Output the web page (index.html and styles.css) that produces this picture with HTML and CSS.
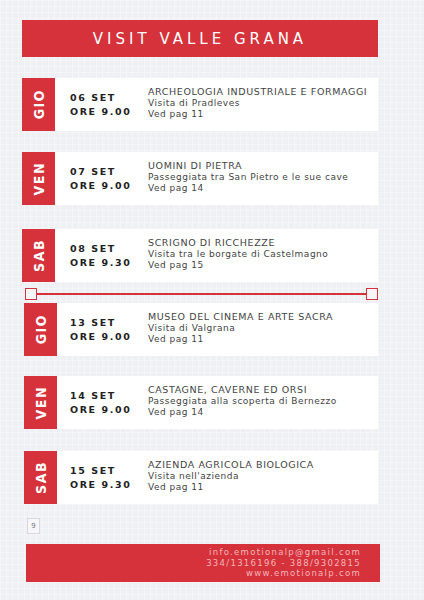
FILE: index.html
```html
<!DOCTYPE html>
<html lang="it">
<head>
<meta charset="utf-8">
<title>Visit Valle Grana</title>
<link rel="stylesheet" href="styles.css">
</head>
<body>
<div class="page">
  <header class="title">VISIT VALLE GRANA</header>

  <div class="events">
    <div class="row r1">
      <div class="day"><span>GIO</span></div>
      <div class="card">
        <div class="date">06 SET<br>ORE 9.00</div>
        <div class="desc"><div class="name">ARCHEOLOGIA INDUSTRIALE E FORMAGGI</div><div>Visita di Pradleves</div><div>Ved pag 11</div></div>
      </div>
    </div>
    <div class="row r2">
      <div class="day"><span>VEN</span></div>
      <div class="card">
        <div class="date">07 SET<br>ORE 9.00</div>
        <div class="desc"><div class="name">UOMINI DI PIETRA</div><div>Passeggiata tra San Pietro e le sue cave</div><div>Ved pag 14</div></div>
      </div>
    </div>
    <div class="row r3">
      <div class="day"><span>SAB</span></div>
      <div class="card">
        <div class="date">08 SET<br>ORE 9.30</div>
        <div class="desc"><div class="name">SCRIGNO DI RICCHEZZE</div><div>Visita tra le borgate di Castelmagno</div><div>Ved pag 15</div></div>
      </div>
    </div>

    <div class="divider"><i class="sq"></i><i class="line"></i><i class="sq"></i></div>

    <div class="row r4 shift">
      <div class="day"><span>GIO</span></div>
      <div class="card">
        <div class="date">13 SET<br>ORE 9.00</div>
        <div class="desc"><div class="name">MUSEO DEL CINEMA E ARTE SACRA</div><div>Visita di Valgrana</div><div>Ved pag 11</div></div>
      </div>
    </div>
    <div class="row r5 shift">
      <div class="day"><span>VEN</span></div>
      <div class="card">
        <div class="date">14 SET<br>ORE 9.00</div>
        <div class="desc"><div class="name">CASTAGNE, CAVERNE ED ORSI</div><div>Passeggiata alla scoperta di Bernezzo</div><div>Ved pag 14</div></div>
      </div>
    </div>
    <div class="row r6 shift">
      <div class="day"><span>SAB</span></div>
      <div class="card">
        <div class="date">15 SET<br>ORE 9.30</div>
        <div class="desc"><div class="name">AZIENDA AGRICOLA BIOLOGICA</div><div>Visita nell'azienda</div><div>Ved pag 11</div></div>
      </div>
    </div>
  </div>

  <div class="pagenum">9</div>

  <footer class="footer">
    <div>info.emotionalp@gmail.com</div>
    <div>334/1316196 - 388/9302815</div>
    <div>www.emotionalp.com</div>
  </footer>
</div>
</body>
</html>
```

FILE: styles.css
```css
html, body {
  margin: 0;
  padding: 0;
}
body {
  width: 424px;
  height: 600px;
  overflow: hidden;
  background-color: #eff0f4;
  background-image:
    linear-gradient(rgba(255,255,255,0.35) 1px, transparent 1px),
    linear-gradient(90deg, rgba(255,255,255,0.35) 1px, transparent 1px);
  background-size: 6px 6px;
  font-family: "DejaVu Sans", "Open Sans", sans-serif;
}
.page {
  padding: 20px 0 0 22px;
  width: 356px;
}
.title {
  height: 37px;
  background: #d6323b;
  color: #fff;
  font-family: "DejaVu Sans", sans-serif;
  font-size: 15px;
  letter-spacing: 4px;
  display: flex;
  align-items: center;
  justify-content: center;
  margin-bottom: 21px;
}
.events {
  display: flex;
  flex-direction: column;
}
.row {
  display: flex;
  height: 53px;
}
.r2 { margin-top: 21px; }
.r3 { margin-top: 24px; }
.r5 { margin-top: 20px; }
.r6 { margin-top: 22px; }
.shift { margin-left: 2px; }
.day {
  width: 33px;
  flex: none;
  background: #d6323b;
  color: #fff;
  display: flex;
  align-items: center;
  justify-content: center;
}
.day span {
  writing-mode: vertical-rl;
  transform: rotate(180deg);
  font-family: "DejaVu Sans Condensed", "DejaVu Sans", sans-serif;
  font-weight: bold;
  font-size: 14px;
  letter-spacing: 1.5px;
}
.card {
  flex: 1;
  background: #fff;
  display: flex;
  align-items: center;
  padding-left: 15px;
}
.shift .card {
  padding-left: 13px;
}
.date {
  width: 78px;
  flex: none;
  font-weight: bold;
  font-size: 9.5px;
  line-height: 14px;
  letter-spacing: 1.6px;
  color: #222;
}
.desc {
  font-size: 9px;
  line-height: 11.5px;
  letter-spacing: 0.5px;
  color: #444;
  white-space: nowrap;
  padding-bottom: 2px;
}
.desc .name {
  font-size: 9.5px;
  letter-spacing: 0.6px;
}
.divider {
  display: flex;
  align-items: center;
  height: 12px;
  margin: 6px 0 3px 3px;
}
.sq {
  width: 10px;
  height: 10px;
  border: 1px solid #d6323b;
  background: #f6f6f8;
  flex: none;
}
.line {
  flex: 1;
  height: 2px;
  background: #d6323b;
}
.pagenum {
  margin: 14px 0 0 5px;
  width: 11px;
  height: 14px;
  border: 1px solid #d8d8de;
  background: #f7f7fa;
  font-size: 7px;
  color: #777;
  display: flex;
  align-items: center;
  justify-content: center;
}
.footer {
  margin: 10px -2px 0 4px;
  height: 38px;
  background: #d6323b;
  color: #f2b6ba;
  font-family: "DejaVu Sans", sans-serif;
  font-size: 8.5px;
  line-height: 10.5px;
  letter-spacing: 1.3px;
  text-align: right;
  padding: 3px 19px 0 0;
  box-sizing: border-box;
}
```
